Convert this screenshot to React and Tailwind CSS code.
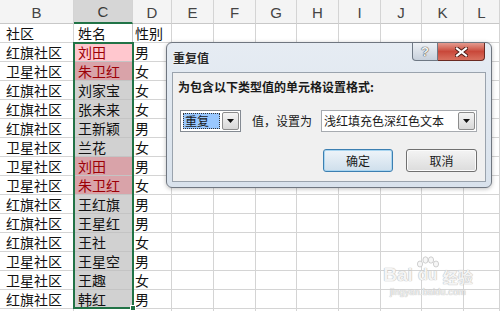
const COLS = ['B', 'C', 'D', 'E', 'F', 'G', 'H', 'I', 'J', 'K', 'L']
const WIDTHS = [
  'w-[74px]', 'w-[59px]', 'w-[39px]', 'w-[42px]', 'w-[42px]', 'w-[41px]',
  'w-[42px]', 'w-[42px]', 'w-[41px]', 'w-[42px]', 'w-[36px]',
]

const ROWS = [
  ['社区', '姓名', '性别', ''],
  ['红旗社区', '刘田', '男', 'active'],
  ['卫星社区', '朱卫红', '女', 'dup'],
  ['红旗社区', '刘家宝', '女', 'sel'],
  ['红旗社区', '张未来', '女', 'sel'],
  ['红旗社区', '王新颖', '男', 'sel'],
  ['卫星社区', '兰花', '女', 'sel'],
  ['卫星社区', '刘田', '男', 'dup'],
  ['卫星社区', '朱卫红', '女', 'dup'],
  ['红旗社区', '王红旗', '男', 'sel'],
  ['红旗社区', '王星红', '男', 'sel'],
  ['红旗社区', '王社', '女', 'sel'],
  ['卫星社区', '王星空', '男', 'sel'],
  ['卫星社区', '王趣', '女', 'sel'],
  ['红旗社区', '韩红', '男', 'sel'],
]

const FILL = {
  '': 'bg-white text-[#111]',
  active: 'bg-[#ffc7ce] text-[#9c0006]',
  dup: 'bg-[#d9a3a9] text-[#9c0006]',
  sel: 'bg-[#d1d1d1] text-[#111]',
}

function HeaderRow() {
  return (
    <div className="flex h-[24px] shrink-0">
      {COLS.map((c, i) => (
        <div
          key={c}
          className={`${WIDTHS[i]} shrink-0 flex items-center justify-center pt-[3px] text-[15px] font-['Liberation_Sans',sans-serif] border-r border-[#d4d4d4] ${
            c === 'C'
              ? 'bg-[#d6d6d6] text-[#3a3a3a] border-b-2 border-b-[#217346]'
              : 'bg-[#f4f4f4] text-[#444] border-b border-b-[#c8c8c8]'
          }`}
        >
          {c}
        </div>
      ))}
    </div>
  )
}

function Row({ cells }) {
  const [b, c, d, kind] = cells
  return (
    <div className="flex h-[19px] shrink-0 text-[14px] leading-[18px]">
      <div className={`${WIDTHS[0]} shrink-0 pl-[6px] border-r border-b border-[#d4d4d4] text-[#111] whitespace-nowrap`}>{b}</div>
      <div className={`${WIDTHS[1]} shrink-0 pl-[4px] border-r border-b border-[#c4c4c4] whitespace-nowrap ${FILL[kind]}`}>{c}</div>
      <div className={`${WIDTHS[2]} shrink-0 pl-[2px] border-r border-b border-[#d4d4d4] text-[#111] whitespace-nowrap`}>{d}</div>
      {WIDTHS.slice(3).map((w, i) => (
        <div key={i} className={`${w} shrink-0 border-r border-b border-[#d4d4d4]`} />
      ))}
    </div>
  )
}

function Arrow() {
  return (
    <svg width="7" height="4" viewBox="0 0 7 4">
      <path d="M0 0H7L3.5 4Z" fill="#111" />
    </svg>
  )
}

function ComboArrow() {
  return (
    <div className="w-[17px] h-[18px] my-[1px] mr-[1px] shrink-0 flex items-center justify-center rounded-[2px] border border-[#8c8c8c] bg-gradient-to-b from-[#f4f4f4] to-[#d8d8d8]">
      <Arrow />
    </div>
  )
}

function Dialog() {
  return (
    <div className="absolute left-[166px] top-[42px] w-[326px] h-[146px] rounded-[6px] border border-[#6f7680] bg-gradient-to-b from-[#e6ecf3] to-[#d9e2ec] shadow-[0_1px_4px_rgba(0,0,0,0.25)] flex flex-col font-['Noto_Sans_CJK_SC',sans-serif] text-[12px]">
      {/* title bar */}
      <div className="h-[29px] shrink-0 flex items-start">
        <div className="pl-[6px] pt-[7px] leading-[16px] font-bold text-[#2a2a2a] [text-shadow:0_0_3px_#fff]">重复值</div>
        <div className="ml-auto mr-[6px] flex">
          <div className="w-[26px] h-[18px] flex items-center justify-center rounded-bl-[4px] border border-t-0 border-[#6e7884] bg-gradient-to-b from-[#eef1f5] to-[#c7d0db] text-[13px] leading-none font-bold text-[#f4f4f4] font-['Liberation_Sans',sans-serif] [text-shadow:0_0_1px_#333,0_0_1px_#333]">
            ?
          </div>
          <div className="w-[47px] h-[18px] flex items-center justify-center rounded-br-[4px] border border-t-0 border-l-0 border-[#6a2a22] bg-gradient-to-b from-[#e39a8f] via-[#c9483a] to-[#d8705f]">
            <svg width="13" height="10" viewBox="0 0 13 10">
              <path d="M2 1.5L11 8.5M11 1.5L2 8.5" stroke="#4a1a14" strokeWidth="4" strokeLinecap="square" />
              <path d="M2 1.5L11 8.5M11 1.5L2 8.5" stroke="#fff" strokeWidth="2.2" strokeLinecap="square" />
            </svg>
          </div>
        </div>
      </div>

      {/* content panel */}
      <div className="mx-[5px] h-[110px] shrink-0 border border-[#9aa3ad] bg-[#f0f0f0] flex flex-col">
        <div className="pl-[5px] pt-[6px] leading-[16px] font-bold text-[#1a1a1a]">为包含以下类型值的单元格设置格式:</div>

        <div className="mt-[15px] pl-[7px] pr-[8px] flex items-center h-[22px] text-[#1a1a1a]">
          <div className="w-[61px] h-[22px] shrink-0 flex border border-[#848a92] bg-white">
            <div className="flex-1 m-[2px] border border-dotted border-[#333] bg-[#99c8ff] leading-[14px] pl-[1px]">重复</div>
            <ComboArrow />
          </div>
          <div className="ml-[11px] w-[69px] shrink-0 whitespace-nowrap">值，设置为</div>
          <div className="w-[156px] h-[22px] shrink-0 flex items-center border border-[#a7abb0] bg-white">
            <div className="flex-1 pl-[2px] whitespace-nowrap">浅红填充色深红色文本</div>
            <ComboArrow />
          </div>
        </div>

        <div className="mt-[17px] pr-[8px] flex justify-end gap-[13px] text-[#1a1a1a]">
          <div className="w-[70px] h-[23px] flex items-center justify-center rounded-[3px] border border-[#3c7fb1] bg-gradient-to-b from-[#eef4f9] to-[#cfdfec] shadow-[inset_0_0_0_1px_#a9d5f0]">
            确定
          </div>
          <div className="w-[71px] h-[23px] flex items-center justify-center rounded-[3px] border border-[#707070] bg-gradient-to-b from-[#f4f4f4] to-[#dcdcdc] shadow-[inset_0_0_0_1px_#fbfbfb]">
            取消
          </div>
        </div>
      </div>
    </div>
  )
}

function Watermark() {
  return (
    <div className="absolute left-[382px] top-[256px] w-[92px] flex flex-col items-center text-[#f4f4f4] [text-shadow:0_0_1px_#b8b8b8,0_0_1px_#b8b8b8] select-none">
      <div className="flex items-end h-[28px] leading-none">
        <span className="text-[19px] font-bold font-['Liberation_Sans',sans-serif]">Bai</span>
        <span className="relative w-[30px] h-[28px] flex items-end justify-center">
          <svg className="absolute left-[3px] top-0" width="24" height="12" viewBox="0 0 24 12">
            <g fill="#f6f6f6" stroke="#c4c4c4" strokeWidth="0.8">
              <ellipse cx="4" cy="8" rx="2.6" ry="3" />
              <ellipse cx="9.5" cy="4" rx="2.6" ry="3.2" />
              <ellipse cx="15" cy="4" rx="2.6" ry="3.2" />
              <ellipse cx="20" cy="8" rx="2.6" ry="3" />
            </g>
          </svg>
          <span className="text-[16px] font-bold font-['Liberation_Sans',sans-serif] pb-[1px]">du</span>
        </span>
        <span className="text-[15px] font-bold font-['Noto_Sans_CJK_SC',sans-serif]">经验</span>
      </div>
      <div className="mt-[3px] text-[9px] leading-[10px] font-['Liberation_Sans',sans-serif] tracking-[0.2px]">jingyan.baidu.com</div>
    </div>
  )
}

export default function App() {
  return (
    <div className="relative w-[500px] h-[311px] overflow-hidden bg-white font-['Noto_Sans_CJK_SC','Noto_Sans',sans-serif]">
      <div className="flex flex-col">
        <HeaderRow />
        {ROWS.map((r, i) => (
          <Row key={i} cells={r} />
        ))}
        <Row cells={['', '', '', '']} />
      </div>

      {/* selection outline on C2:C15 */}
      <div className="absolute left-[73px] top-[42px] w-[61px] h-[267px] border-2 border-[#217346] pointer-events-none" />
      <div className="absolute left-[130px] top-[305px] w-[6px] h-[6px] bg-[#217346] border border-white" />

      <Dialog />
      <Watermark />
    </div>
  )
}
